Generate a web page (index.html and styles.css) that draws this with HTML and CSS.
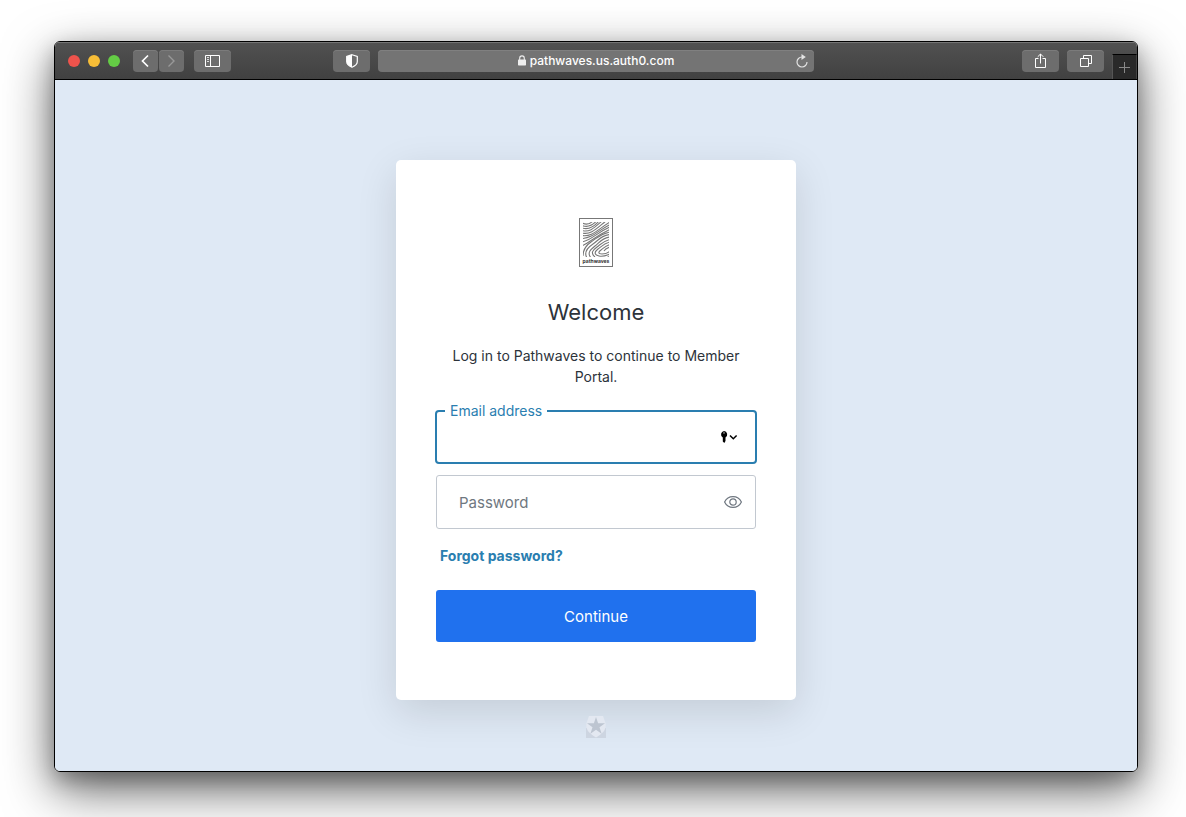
FILE: index.html
```html
<!DOCTYPE html>
<html lang="en">
<head>
  <meta charset="UTF-8" />
  <meta name="viewport" content="width=device-width, initial-scale=1" />
  <title>Log in | Pathwaves</title>
  <link rel="stylesheet" href="styles.css">
</head>
<body>

  <div class="window">
    <header class="toolbar">
      <div class="toolbar-left">
        <div class="lights">
          <span class="light red"></span>
          <span class="light yellow"></span>
          <span class="light green"></span>
        </div>
        <div class="nav-buttons">
          <button class="tool-btn nav-btn" type="button" aria-label="Back">
            <svg width="11" height="14" viewBox="0 0 11 14"><path d="M8 1.500 2.500 7 8 12.500" fill="none" stroke="#fff" stroke-width="1.700"/></svg>
          </button>
          <button class="tool-btn nav-btn" type="button" aria-label="Forward">
            <svg width="11" height="14" viewBox="0 0 11 14"><path d="M2.500 1.500 8 7 2.500 12.500" fill="none" stroke="#999" stroke-width="1.400"/></svg>
          </button>
        </div>
        <button class="tool-btn" type="button" aria-label="Show sidebar">
          <svg width="15" height="12" viewBox="0 0 15 12"><path d="M.5.5h14v11H.5zM5.500.5v11" fill="none" stroke="#fff"/><path d="M2 2.500h2M2 4.500h2M2 6.500h2" stroke="#ddd"/></svg>
        </button>
      </div>

      <div class="toolbar-center">
        <button class="tool-btn" type="button" aria-label="Privacy report">
          <svg width="12" height="14" viewBox="0 0 12 14"><path d="M6 .7 11.300 2.400v5.200c0 2.500-2 4.400-5.300 5.700C2.700 12 .7 10.100.7 7.600V2.400z" fill="none" stroke="#fff" stroke-width="1.200"/><path d="M6 .7.7 2.400v5.200c0 2.500 2 4.400 5.300 5.700z" fill="#fff"/></svg>
        </button>
        <div class="address">
          <div class="address-text">
            <svg width="8" height="11" viewBox="0 0 8 11"><path d="M1.700 5V3.200a2.300 2.300 0 0 1 4.600 0V5" fill="none" stroke="#eee" stroke-width="1.100"/><rect y="4.500" width="8" height="6" rx=".7" fill="#eee"/></svg>
            <span>pathwaves.us.auth0.com</span>
          </div>
          <button class="reload" type="button" aria-label="Reload">
            <svg width="12" height="14" viewBox="0 0 12 14"><path d="M6 3A5 5 0 1 0 11 8" fill="none" stroke="#e4e4e4" stroke-width="1.200"/><path d="M5.500 0 9.800 3 5.500 6z" fill="#e4e4e4"/></svg>
          </button>
        </div>
      </div>

      <div class="toolbar-right">
        <button class="tool-btn" type="button" aria-label="Share">
          <svg width="11" height="16" viewBox="0 0 11 16"><path d="M3.500 5.500h-3v9h10v-9h-3M5.500 10.500V1M2.700 3.800 5.500 1l2.800 2.800" fill="none" stroke="#fff"/></svg>
        </button>
        <button class="tool-btn" type="button" aria-label="Show all tabs">
          <svg width="12" height="12" viewBox="0 0 12 12"><path d="M.5 3.500h8v8h-8zM3.500 3.500v-3h8v8h-3" fill="none" stroke="#fff"/></svg>
        </button>
        <button class="new-tab" type="button" aria-label="New tab">
          <svg width="11" height="11" viewBox="0 0 11 11"><path d="M5.500 0v11M0 5.500h11" stroke="#888"/></svg>
        </button>
      </div>
    </header>

    <main class="page">
      <section class="card">
        <svg class="logo" width="34" height="49" viewBox="0 0 34 49" role="img" aria-label="Pathwaves">
          <rect x=".5" y=".5" width="33" height="48" fill="#fff" stroke="#777"/>
          <clipPath id="art"><rect x="4" y="4" width="26" height="35"/></clipPath>
          <g clip-path="url(#art)" fill="none" stroke="#777" stroke-width="1.100">
            <path d="M3 5c4 2 7 2 11-2"/>
            <path d="M3 7.500c5 2 9 1 14-4"/>
            <path d="M3 10c6 2 11 0 17-7"/>
            <path d="M3 12.500C11 15 16 9 23 3"/>
            <path d="M3 15C12 17 17 11 27 3"/>
            <path d="M3 17.500C13 19 18 12 31 4"/>
            <path d="M3 20.500C14 20 18 13 31 6.500"/>
            <path d="M3 24C13 22 17 15 31 9"/>
            <path d="M3 28C11 24 17 18 31 11.500"/>
            <path d="M31 14C21 16 18 20 12 24S4 32 4 38"/>
            <path d="M31 16.500C21 18 20 22 14 26S5 35 8 40"/>
            <path d="M31 19C23 20 21 24 16 28S8 35 12 40"/>
            <path d="M31 21.500C24 23 22 26 18 29S11 35 16 39"/>
            <path d="M31 24C26 25 23 28 19 31s-4 6 1 7 8-1 11-2"/>
            <path d="M31 26.500C26 28 25 30 22 32s-3 4 1 4 6-1 8-3"/>
            <path d="M31 29c-3 1-5 2-6 4"/>
            <path d="M20 40c4 1 8 0 11-2"/>
          </g>
          <text x="17" y="45" text-anchor="middle" class="logo-text">pathwaves</text>
        </svg>

        <h1>Welcome</h1>
        <p class="intro">Log in to Pathwaves to continue to Member Portal.</p>

        <form class="login-form">
          <div class="field active">
            <label for="email">Email address</label>
            <input id="email" type="email" autocomplete="username">
            <button class="field-btn key-btn" type="button" aria-label="Choose saved login">
              <svg width="18" height="12" viewBox="0 0 18 12"><path d="M4 0a3.500 3.500 0 0 1 1.500 6.500V10L4.300 12 2.800 10.500v-4A3.500 3.500 0 0 1 4 0z" fill="#000"/><circle cx="4" cy="1.900" r=".7" fill="#fff"/><path d="m10 4.500 3.300 3.300 3.300-3.300" fill="none" stroke="#000" stroke-width="1.500"/></svg>
            </button>
          </div>
          <div class="field">
            <input id="password" type="password" placeholder="Password" aria-label="Password" autocomplete="current-password">
            <button class="field-btn" type="button" aria-label="Show password">
              <svg width="18" height="12" viewBox="0 0 18 12"><path d="M.6 6C2 3 5 .6 9 .6S16 3 17.400 6C16 9 13 11.400 9 11.400S2 9 .6 6z" fill="none" stroke="#6f7780" stroke-width="1.200"/><circle cx="9" cy="6" r="3.200" fill="none" stroke="#6f7780" stroke-width="1.200"/></svg>
            </button>
          </div>
          <a class="forgot" href="#">Forgot password?</a>
          <button class="continue" type="submit">Continue</button>
        </form>
      </section>

      <a class="badge" href="#" aria-label="Auth0">
        <svg width="20" height="22" viewBox="0 0 20 22"><path d="M0 12h20v10H0z" fill="#cdd5e1"/><path d="M3 0h14l2.500 7c1 6-1.500 10-9.500 14.500C2 17 -.5 13 .5 7z" fill="#e3e8f1"/><path d="m10 1 2.100 6.300H19l-5.500 4 2.100 6.400-5.600-4-5.600 4 2.100-6.400L1 7.300h6.900z" fill="#bdc5d1"/></svg>
      </a>
    </main>
  </div>

</body>
</html>
```
FILE: styles.css
```css
* {
  box-sizing: border-box;
}

body {
  margin: 0;
  min-height: 100vh;
  padding: 41px 48px 45px 54px;
  display: flex;
  background: #fff;
  font-family: Inter, "Liberation Sans", sans-serif;
  color: #2d333a;
}

button {
  font-family: inherit;
  border: none;
  padding: 0;
  cursor: pointer;
}

svg {
  display: block;
}

.window {
  flex: 1;
  display: flex;
  flex-direction: column;
  border: 1px solid #000;
  border-radius: 6px;
  overflow: hidden;
  box-shadow: 0 18px 50px rgba(0, 0, 0, 0.6), 0 8px 20px rgba(0, 0, 0, 0.25);
}

/* browser toolbar */
.toolbar {
  display: flex;
  height: 38px;
  background: linear-gradient(#515151, #414141);
  border-bottom: 1px solid #000;
  box-shadow: inset 0 1px #757575;
}

.toolbar-left,
.toolbar-center,
.toolbar-right,
.lights,
.nav-buttons {
  display: flex;
  align-items: center;
}

.toolbar-left {
  width: 278px;
  padding-left: 13px;
}

.lights {
  gap: 8px;
  margin-right: 13px;
}

.light {
  width: 12px;
  height: 12px;
  border-radius: 50%;
}

.red {
  background: #ee534c;
}

.yellow {
  background: #f7bd37;
}

.green {
  background: #64cc45;
}

.nav-buttons {
  gap: 1px;
  margin-right: 10px;
}

.tool-btn {
  width: 37px;
  height: 22px;
  display: flex;
  align-items: center;
  justify-content: center;
  border-radius: 4px;
  background: #6d6d6d;
  box-shadow: inset 0 1px #7b7b7b;
}

.nav-btn {
  width: 25px;
}

.toolbar-center {
  flex: 1;
  gap: 8px;
}

.address {
  flex: 1;
  height: 22px;
  display: flex;
  align-items: center;
  padding: 0 6px 0 18px;
  border-radius: 4px;
  background: #747474;
  box-shadow: inset 0 1px #808080;
}

.address-text {
  flex: 1;
  display: flex;
  align-items: center;
  justify-content: center;
  gap: 4px;
  color: #fff;
  font-size: 12px;
  font-weight: 500;
}

.reload {
  background: none;
}

.toolbar-right {
  width: 323px;
  justify-content: flex-end;
  gap: 8px;
}

.new-tab {
  align-self: flex-end;
  width: 25px;
  height: 25px;
  display: flex;
  align-items: center;
  justify-content: center;
  background: #292929;
  border-top: 1px solid #000;
  border-left: 1px solid #555;
  border-right: 1px solid #444;
}

/* login page */
.page {
  flex: 1;
  display: flex;
  flex-direction: column;
  align-items: center;
  padding: 80px 16px 16px;
  background: #dfe9f5;
}

.card {
  width: 100%;
  max-width: 400px;
  padding: 58px 40px;
  display: flex;
  flex-direction: column;
  align-items: center;
  background: #fff;
  border-radius: 5px;
  box-shadow: 0 12px 40px rgba(0, 0, 0, 0.12);
}

.logo-text {
  font-size: 5px;
  font-weight: 700;
  fill: #333;
}

h1 {
  margin: 31px 0 0;
  font-size: 22px;
  line-height: 28px;
  font-weight: 400;
}

.intro {
  margin: 19px 0 23px;
  padding: 0 16px;
  font-size: 14px;
  line-height: 21px;
  text-align: center;
}

.login-form {
  width: 100%;
}

.field {
  position: relative;
  display: flex;
  height: 54px;
  margin-bottom: 11px;
  border: 1px solid #c2c8d0;
  border-radius: 3px;
}

.field.active {
  margin-left: -1px;
  margin-right: -1px;
  border: 2px solid #2a7eb0;
  border-radius: 4px;
}

.field label {
  position: absolute;
  top: -11px;
  left: 8px;
  padding: 0 5px;
  background: #fff;
  color: #2a7eb0;
  font-size: 14px;
  line-height: 20px;
}

.field input {
  flex: 1;
  min-width: 0;
  padding: 0 0 0 22px;
  border: none;
  outline: none;
  background: transparent;
  font-family: inherit;
  font-size: 15px;
  color: #2d333a;
}

.field input::placeholder {
  color: #6f7780;
}

.field-btn {
  padding: 0 13px;
  background: none;
}

.key-btn {
  padding: 0 17px;
}

.forgot {
  display: inline-block;
  margin: 6px 0 25px 4px;
  color: #2a7eb0;
  font-size: 14px;
  line-height: 19px;
  font-weight: 700;
  text-decoration: none;
}

.continue {
  display: block;
  width: 100%;
  height: 52px;
  border-radius: 3px;
  background: #2071ee;
  color: #fff;
  font-size: 15px;
}

.badge {
  margin-top: 16px;
}
```
